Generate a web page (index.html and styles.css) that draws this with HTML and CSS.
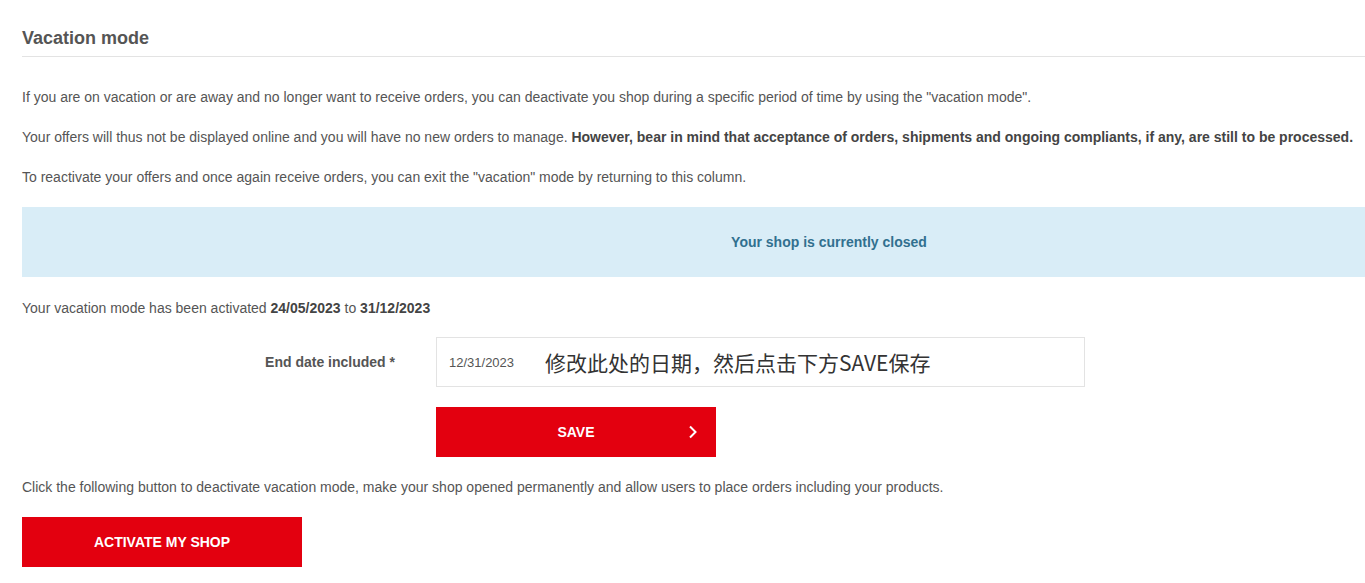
FILE: index.html
```html
<!DOCTYPE html>
<html lang="en">
<head>
    <meta charset="UTF-8">
    <title>Vacation mode</title>
    <link rel="stylesheet" href="styles.css">
</head>
<body>
<div class="page">
    <h2 class="title">Vacation mode</h2>
    <p>If you are on vacation or are away and no longer want to receive orders, you can deactivate you shop during a specific period of time by using the "vacation mode".</p>
    <p>Your offers will thus not be displayed online and you will have no new orders to manage. <b>However, bear in mind that acceptance of orders, shipments and ongoing compliants, if any, are still to be processed.</b></p>
    <p class="last">To reactivate your offers and once again receive orders, you can exit the "vacation" mode by returning to this column.</p>
    <div class="alert">Your shop is currently closed</div>
    <p class="status">Your vacation mode has been activated <b>24/05/2023</b> to <b>31/12/2023</b></p>
    <form class="form">
        <label class="label" for="end-date">End date included *</label>
        <div class="field">
            <span class="date" id="end-date">12/31/2023</span>
            <span class="note">修改此处的日期，然后点击下方SAVE保存</span>
        </div>
        <div></div>
        <button type="button" class="btn btn-save">
            <span>SAVE</span>
            <svg class="chev" width="10" height="14" viewBox="0 0 10 14"><path d="M2 1.5 L7.5 7 L2 12.5" fill="none" stroke="#fff" stroke-width="2"/></svg>
        </button>
    </form>
    <p class="hint">Click the following button to deactivate vacation mode, make your shop opened permanently and allow users to place orders including your products.</p>
    <button type="button" class="btn btn-activate">ACTIVATE MY SHOP</button>
</div>
</body>
</html>
```

FILE: styles.css
```css
*{margin:0;padding:0;box-sizing:border-box}
html,body{overflow:hidden}
body{
    background:#fff;
    font-family:"Liberation Sans",Arial,sans-serif;
    font-size:14px;
    color:#555;
}
.page{
    width:1614px;
    margin-left:22px;
    padding-top:27px;
}
.title{
    font-size:18px;
    font-weight:bold;
    color:#555;
    line-height:22px;
    padding-bottom:7px;
    border-bottom:1px solid #e3e3e3;
    margin-bottom:32px;
}
p{line-height:16px;margin-bottom:24px}
p b{color:#444}
p.last{margin-bottom:22px}
.alert{
    background:#d9edf7;
    color:#31708f;
    font-weight:bold;
    height:70px;
    line-height:70px;
    text-align:center;
    margin-bottom:23px;
}
.status{margin-bottom:21px}
.form{
    display:grid;
    grid-template-columns:373px 649px;
    column-gap:41px;
    row-gap:20px;
    align-items:center;
}
.label{
    text-align:right;
    font-weight:bold;
    color:#555;
}
.field{
    height:50px;
    border:1px solid #e3e3e3;
    display:flex;
    align-items:center;
    padding-left:12px;
}
.date{color:#555;font-size:13px;width:96px}
.note{
    font-family:"Noto Sans CJK SC",sans-serif;
    font-size:21px;
    color:#333;
}
.btn{
    display:flex;
    align-items:center;
    justify-content:center;
    background:#e3000f;
    color:#fff;
    border:none;
    font-family:"Liberation Sans",Arial,sans-serif;
    font-size:14px;
    font-weight:bold;
    height:50px;
    width:280px;
}
.btn-save{position:relative}
.btn-save .chev{position:absolute;right:18px;top:18px}
.hint{margin-top:22px;margin-bottom:22px}
```
